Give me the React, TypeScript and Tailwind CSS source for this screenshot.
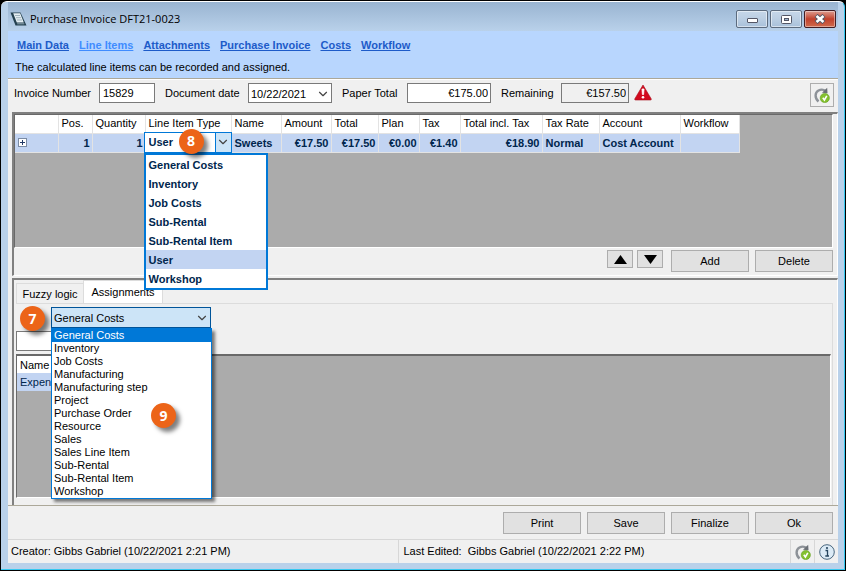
import React from 'react';
import { ChevronDown } from 'lucide-react';

const tabs = ['Main Data', 'Line Items', 'Attachments', 'Purchase Invoice', 'Costs', 'Workflow'];

const columns = [
  { title: '', width: 'w-[43px]', value: '' },
  { title: 'Pos.', width: 'w-[34px]', value: '1', right: true },
  { title: 'Quantity', width: 'w-[53px]', value: '1', right: true },
  { title: 'Line Item Type', width: 'w-[86px]', value: 'User' },
  { title: 'Name', width: 'w-[50px]', value: 'Sweets' },
  { title: 'Amount', width: 'w-[50px]', value: '€17.50', right: true },
  { title: 'Total', width: 'w-[47px]', value: '€17.50', right: true },
  { title: 'Plan', width: 'w-[41px]', value: '€0.00', right: true },
  { title: 'Tax', width: 'w-[41px]', value: '€1.40', right: true },
  { title: 'Total incl. Tax', width: 'w-[82px]', value: '€18.90', right: true },
  { title: 'Tax Rate', width: 'w-[57px]', value: 'Normal' },
  { title: 'Account', width: 'w-[81px]', value: 'Cost Account' },
  { title: 'Workflow', width: 'w-[59px]', value: '' },
];

const itemTypes = ['General Costs', 'Inventory', 'Job Costs', 'Sub-Rental', 'Sub-Rental Item', 'User', 'Workshop'];

const assignmentTypes = [
  'General Costs',
  'Inventory',
  'Job Costs',
  'Manufacturing',
  'Manufacturing step',
  'Project',
  'Purchase Order',
  'Resource',
  'Sales',
  'Sales Line Item',
  'Sub-Rental',
  'Sub-Rental Item',
  'Workshop',
];

function Callout({ label, className }: { label: string; className: string }) {
  return (
    <span
      className={`absolute z-30 flex h-[25px] w-[25px] items-center justify-center rounded-full bg-[#ec6418] font-['Open_Sans',sans-serif] text-[14px] font-bold text-white shadow-[4px_4px_4px_rgba(0,0,0,0.5)] ${className}`}
    >
      {label}
    </span>
  );
}

function PushButton({ children }: { children: React.ReactNode }) {
  return (
    <button type="button" className="h-[22px] w-[78px] border border-[#adadad] bg-[#e1e1e1] text-center">
      {children}
    </button>
  );
}

function RefreshIcon({ className }: { className: string }) {
  return (
    <svg viewBox="0 0 16 16" className={className} aria-hidden="true">
      <path d="M4.5 14.5 C0.5 11 0.8 5.5 4.5 3.5 C7 2.2 9.5 2.4 11.5 4" fill="none" stroke="#8d9298" strokeWidth="2.4" />
      <path d="M8 5.8 L13.5 6.2 L13.2 0.8 Z" fill="#6b7076" />
      <circle cx="10.8" cy="11" r="4.6" fill="#84c12e" stroke="#62a01d" strokeWidth="0.6" />
      <path d="M8.8 10.8 L10.4 13 L12.8 8.8" fill="none" stroke="#fff" strokeWidth="1.6" />
    </svg>
  );
}

function TitleBar() {
  return (
    <header className="flex h-[29px] items-start bg-linear-to-b from-[#99b4d1] to-[#b9d1ea] pl-[2px]">
      <svg viewBox="0 0 17 16" className="mt-[9px] h-4 w-[17px]" aria-hidden="true">
        <path d="M0.5 1.5 L10.5 1.5 L16.5 14.5 L5.5 14.5 Z" fill="#24404f" />
        <path d="M3.2 2.2 L10.2 2.2 L13.8 11.5 L6.8 11.5 Z" fill="#e4eef3" />
        <path d="M5 4.5 H10 M6 6.7 H11 M7 9 H12" stroke="#8fa5b0" strokeWidth="0.8" />
        <path d="M7.2 12.8 L14.3 12.8" stroke="#9fb5c0" strokeWidth="0.9" />
      </svg>
      <h1 className="mt-[9px] ml-[3px] flex-1 font-['Open_Sans',sans-serif] text-[11px] leading-4 text-black">
        Purchase Invoice DFT21-0023
      </h1>
      <div className="mt-2 mr-[2px] flex gap-[2px]">
        <button
          type="button"
          aria-label="Minimize"
          className="flex h-[18px] w-8 items-center justify-center rounded-[2px] border border-[#5c6b7e] bg-linear-to-b from-[#c6d7e9] via-[#bccfe3] via-45% to-[#a9c1da] inset-ring inset-ring-white/50"
        >
          <span className="mt-[3px] h-[5px] w-[11px] rounded-[1px] border border-[#535666] bg-white" />
        </button>
        <button
          type="button"
          aria-label="Maximize"
          className="flex h-[18px] w-8 items-center justify-center rounded-[2px] border border-[#5c6b7e] bg-linear-to-b from-[#c6d7e9] via-[#bccfe3] via-45% to-[#a9c1da] inset-ring inset-ring-white/50"
        >
          <svg viewBox="0 0 11 9" className="h-[9px] w-[11px]" aria-hidden="true">
            <rect x="0.5" y="0.5" width="10" height="8" rx="1" fill="#fff" stroke="#535666" />
            <rect x="3.5" y="3.5" width="4" height="2" fill="#9db5cf" stroke="#535666" />
          </svg>
        </button>
        <button
          type="button"
          aria-label="Close"
          className="flex h-[18px] w-8 items-center justify-center rounded-[2px] border border-[#431d23] bg-linear-to-b from-[#dc9c90] via-[#c1402c] via-50% to-[#cf6a4d] inset-ring inset-ring-white/40"
        >
          <svg viewBox="0 0 12 10" className="h-[10px] w-3" aria-hidden="true">
            <path d="M2 1.5 L10 8.5 M10 1.5 L2 8.5" stroke="#535666" strokeWidth="4.4" />
            <path d="M2.5 2 L9.5 8 M9.5 2 L2.5 8" stroke="#fff" strokeWidth="2.6" />
          </svg>
        </button>
      </div>
    </header>
  );
}

function InvoiceForm() {
  return (
    <form className="flex items-start pt-[3px] pr-1 pb-[5px] pl-[6px] leading-5">
      <label htmlFor="number" className="w-[85px]">Invoice Number</label>
      <input id="number" defaultValue="15829" className="h-5 w-14 border border-[#7a7a7a] bg-white px-[3px]" />
      <label htmlFor="date" className="w-[93px] pl-[10px]">Document date</label>
      <div className="relative">
        <select id="date" className="h-5 w-[84px] appearance-none border border-[#7a7a7a] bg-white pl-[2px]">
          <option>10/22/2021</option>
        </select>
        <ChevronDown className="pointer-events-none absolute top-1 right-[2px] h-[14px] w-[14px] text-[#444]" />
      </div>
      <label htmlFor="paper" className="w-[75px] pl-[10px]">Paper Total</label>
      <input id="paper" defaultValue="€175.00" className="h-5 w-[84px] border border-[#7a7a7a] bg-white px-[2px] text-right" />
      <label htmlFor="remaining" className="w-[70px] pl-[10px]">Remaining</label>
      <input id="remaining" readOnly value="€157.50" className="h-5 w-[68px] border border-[#7a7a7a] bg-[#f0f0f0] px-[2px] text-right" />
      <svg viewBox="0 0 18 17" className="mt-[1px] ml-[5px] h-[17px] w-[18px]" role="img" aria-label="Warning">
        <path d="M9 1 L17.3 15 Q17.5 16 16.5 16 L1.5 16 Q0.5 16 0.7 15 Z" fill="#d20a1e" stroke="#a80d1b" strokeWidth="0.6" />
        <path d="M8 5 L10 5 L9.6 10.5 L8.4 10.5 Z" fill="#fff" stroke="#fff" strokeWidth="0.8" />
        <circle cx="9" cy="13.2" r="1.3" fill="#fff" />
      </svg>
      <button type="button" aria-label="Refresh" className="ml-auto flex h-6 w-6 items-center justify-center border border-[#adadad] bg-[#f0f0f0]">
        <RefreshIcon className="h-4 w-4" />
      </button>
    </form>
  );
}

function ItemTypeEditor() {
  return (
    <div className="absolute -top-[2px] -left-[2px] z-20 w-[88px]">
      <div className="relative flex h-[21px] border border-[#0078d7] bg-white">
        <select aria-label="Line Item Type" defaultValue="User" className="h-full w-full appearance-none pl-1 font-bold text-[#00264d]">
          {itemTypes.map((type) => (
            <option key={type}>{type}</option>
          ))}
        </select>
        <span className="pointer-events-none absolute inset-y-0 right-0 flex w-4 items-center justify-center border-l border-[#0078d7] bg-[#cce4f7]">
          <ChevronDown className="h-[14px] w-[14px] text-[#444]" />
        </span>
      </div>
      <ul role="listbox" aria-label="Line item types" className="absolute top-[21px] left-0 w-[124px] border-2 border-[#0078d7] bg-white text-[#00264d]">
        {itemTypes.map((type) => (
          <li key={type} role="option" aria-selected={type === 'User'} className="h-[19px] pl-[3px] leading-5 aria-selected:bg-[#c2d4f2]">
            {type}
          </li>
        ))}
      </ul>
      <Callout label="8" className="-top-[3px] left-[35px]" />
    </div>
  );
}

function LineItems() {
  return (
    <section className="border-t-2 border-l-2 border-r border-b border-t-[#808080] border-l-[#808080] border-r-white border-b-white pr-[4px]">
      <div className="h-[134px] border border-t-[#696969] border-l-[#696969] border-r-white border-b-white bg-[#ababab]">
        <table className="table-fixed border-r border-b border-[#696969] bg-white">
          <thead>
            <tr className="h-[18px]">
              {columns.map((col) => (
                <th key={col.title} className={`border-r border-b border-[#e3e3e3] p-0 pl-[3px] text-left leading-[17px] font-normal whitespace-nowrap ${col.width}`}>
                  {col.title}
                </th>
              ))}
            </tr>
          </thead>
          <tbody>
            <tr className="h-[19px] bg-[#c2d4f2] font-bold text-[#00264d]">
              {columns.map((col, i) => (
                <td key={col.title} className={`relative border-r border-b border-[#e3e3e3] p-0 whitespace-nowrap ${col.right ? 'pr-[2px] text-right' : 'pl-[3px]'}`}>
                  {i === 0 && (
                    <button type="button" aria-label="Expand row" className="flex h-[9px] w-[9px] items-center justify-center border border-[#7a8ba5] bg-white">
                      <svg viewBox="0 0 5 5" className="h-[5px] w-[5px]" aria-hidden="true">
                        <path d="M0 2.5 H5 M2.5 0 V5" stroke="#223a66" />
                      </svg>
                    </button>
                  )}
                  {i === 3 ? <ItemTypeEditor /> : col.value}
                </td>
              ))}
            </tr>
          </tbody>
        </table>
      </div>
      <div className="flex justify-end pt-[2px] pb-[3px]">
        <button type="button" aria-label="Move up" className="flex h-[18px] w-[26px] items-center justify-center border border-[#adadad] bg-[#e1e1e1]">
          <svg viewBox="0 0 13 9" className="h-[9px] w-[13px]"><path d="M6.5 0 L13 9 H0 Z" /></svg>
        </button>
        <button type="button" aria-label="Move down" className="mr-2 ml-1 flex h-[18px] w-[26px] items-center justify-center border border-[#adadad] bg-[#e1e1e1]">
          <svg viewBox="0 0 13 9" className="h-[9px] w-[13px]"><path d="M6.5 9 L13 0 H0 Z" /></svg>
        </button>
        <div className="flex gap-[6px]">
          <PushButton>Add</PushButton>
          <PushButton>Delete</PushButton>
        </div>
      </div>
    </section>
  );
}

function Assignments() {
  return (
    <section className="mt-[2px] flex flex-1 flex-col border-t-2 border-l-2 border-r border-t-[#808080] border-l-[#808080] border-r-white pr-[4px] pl-[2px]">
      <div role="tablist" className="flex items-end">
        <button type="button" role="tab" aria-selected="false" className="h-5 w-[67px] border-t border-l border-[#dcdcdc] text-center">
          Fuzzy logic
        </button>
        <button type="button" role="tab" aria-selected="true" className="h-[23px] w-20 border-x border-t border-[#dcdcdc] bg-white text-center">
          Assignments
        </button>
      </div>
      <div className="flex flex-1 flex-col border-t border-r border-[#dcdcdc] pt-[3px] pr-[1px]">
        <div className="relative z-10 ml-[35px] w-40">
          <select aria-label="Assignment type" className="h-[21px] w-full appearance-none border border-[#005499] bg-[#cce4f7] pl-[2px]">
            {assignmentTypes.map((type) => (
              <option key={type}>{type}</option>
            ))}
          </select>
          <ChevronDown className="pointer-events-none absolute top-[4px] right-[2px] h-[14px] w-[14px] text-[#444]" />
          <ul role="listbox" aria-label="Assignment types" className="absolute top-[21px] left-0 w-[161px] border border-[#0078d7] bg-white shadow-[3px_3px_3px_rgba(0,0,0,0.5)]">
            {assignmentTypes.map((type, i) => (
              <li key={type} role="option" aria-selected={i === 0} className="h-[13px] pl-[2px] leading-[13px] aria-selected:bg-[#0078d7] aria-selected:text-white">
                {type}
              </li>
            ))}
          </ul>
          <Callout label="9" className="top-[96px] left-[100px]" />
          <Callout label="7" className="-top-[1px] -left-[31px]" />
        </div>
        <input aria-label="Filter" className="mt-[3px] h-5 w-[120px] border border-[#7a7a7a] bg-white px-1" />
        <div className="mt-[3px] mb-[7px] flex-1 border-t-2 border-r border-b border-l border-t-[#696969] border-l-[#696969] border-r-white border-b-white bg-[#ababab]">
          <table className="w-[120px] bg-white">
            <thead>
              <tr className="h-[17px]"><th className="p-0 pl-[3px] text-left font-normal">Name</th></tr>
            </thead>
            <tbody>
              <tr className="h-[18px] bg-[#c2d4f2] text-[#00264d]"><td className="p-0 pl-[3px]">Expen</td></tr>
            </tbody>
          </table>
        </div>
      </div>
    </section>
  );
}

function App() {
  return (
    <div className="flex min-h-screen flex-col border border-black bg-black font-['Liberation_Sans',Arial,sans-serif] text-[11px] leading-[14px] text-black">
      <div className="flex flex-1 flex-col rounded-t-md border-t border-r border-b border-t-white border-r-[#35c8f0] border-b-[#35c8f0] bg-[#b9d1ea] pr-[6px] pb-[6px] pl-[7px]">
        <TitleBar />
        <div className="bg-[#b8d6fe] px-[7px] pt-[7px] pb-1">
          <nav className="flex gap-[10px] pl-[2px] font-bold">
            {tabs.map((tab) => (
              <a
                key={tab}
                href="#"
                aria-current={tab === 'Line Items' ? 'page' : undefined}
                className="text-[#1d5bc9] underline aria-[current]:text-[#3f8cff]"
              >
                {tab}
              </a>
            ))}
          </nav>
          <p className="mt-2">The calculated line items can be recorded and assigned.</p>
        </div>
        <main className="flex flex-1 flex-col border-t border-[#aca899] bg-[#f0f0f0]">
          <div className="flex flex-1 flex-col border-t border-white">
            <InvoiceForm />
            <div className="flex flex-1 flex-col pl-1">
              <LineItems />
              <Assignments />
            </div>
          </div>
        </main>
        <footer className="bg-[#f0f0f0]">
          <div className="flex justify-end gap-[6px] border-t border-[#aca899] pt-[6px] pr-[5px] pb-[5px]">
            <PushButton>Print</PushButton>
            <PushButton>Save</PushButton>
            <PushButton>Finalize</PushButton>
            <PushButton>Ok</PushButton>
          </div>
          <div className="flex border-t border-[#d7d7d7] leading-[23px]">
            <span className="flex-1 pl-[3px]">Creator: Gibbs Gabriel (10/22/2021 2:21 PM)</span>
            <span className="flex-1 border-l border-[#d7d7d7] pl-[5px] whitespace-pre">Last Edited:  Gibbs Gabriel (10/22/2021 2:22 PM)</span>
            <span className="flex w-6 items-center justify-center border-l border-[#d7d7d7]">
              <RefreshIcon className="h-4 w-4" />
            </span>
            <span className="flex w-6 items-center justify-center border-l border-[#d7d7d7]">
              <svg viewBox="0 0 16 16" className="h-4 w-4" role="img" aria-label="Info">
                <circle cx="8" cy="8" r="7.3" fill="#dcebf6" stroke="#49677f" strokeWidth="1" />
                <path d="M6.5 6.5 H8.5 V12 M6.3 12 H10" fill="none" stroke="#27465f" strokeWidth="1.3" />
                <circle cx="8" cy="4" r="1.1" fill="#27465f" />
              </svg>
            </span>
          </div>
        </footer>
      </div>
    </div>
  );
}

export default App;
